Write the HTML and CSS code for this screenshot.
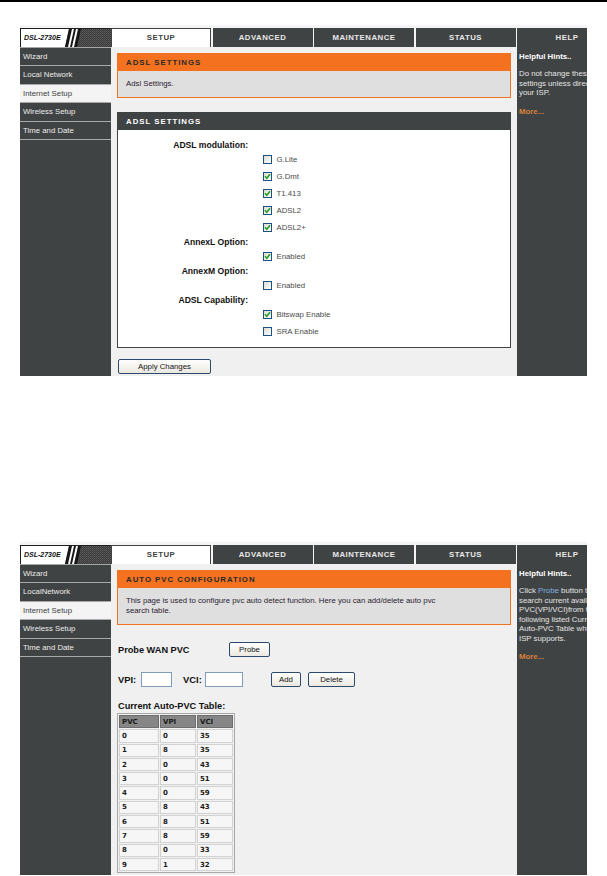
FILE: index.html
```html
<!DOCTYPE html>
<html>
<head>
    <meta charset="utf-8">
    <title>DSL-2730E Setup</title>
    <link rel="stylesheet" href="styles.css">
</head>
<body>
<div class="page-rule"></div>

<!-- ADSL settings page -->
<div class="shot shot-adsl">
    <div class="top-bar">
        <div class="logo">
            <span class="logo-text">DSL-2730E</span>
            <svg class="logo-mark" width="47" height="18" viewBox="0 0 47 18">
                <defs>
                    <pattern id="grain-a" width="2" height="2" patternUnits="userSpaceOnUse">
                        <rect width="2" height="2" fill="#3b3b3b"/>
                        <rect width="1" height="1" fill="#5e5e5e"/>
                        <rect x="1" y="1" width="1" height="1" fill="#4f4f4f"/>
                    </pattern>
                </defs>
                <rect width="47" height="18" fill="url(#grain-a)"/>
                <polygon points="0,0 5,0 1,18 0,18" fill="#fff"/>
                <polygon points="5,0 17,0 13,18 1,18" fill="#161616"/>
                <polygon points="8,0 10,0 6,18 4,18" fill="#fff"/>
                <polygon points="12,0 14,0 10,18 8,18" fill="#fff"/>
            </svg>
        </div>
        <div class="tabs">
            <div class="tab active">SETUP</div>
            <div class="tab">ADVANCED</div>
            <div class="tab">MAINTENANCE</div>
            <div class="tab">STATUS</div>
            <div class="tab">HELP</div>
        </div>
    </div>

    <div class="layout">
        <ul class="side-nav">
            <li>Wizard</li>
            <li>Local Network</li>
            <li class="current">Internet Setup</li>
            <li>Wireless Setup</li>
            <li>Time and Date</li>
        </ul>

        <div class="main">
            <div class="panel-orange">
                <div class="panel-title">ADSL SETTINGS</div>
                <div class="panel-body">Adsl Settings.</div>
            </div>

            <div class="panel-dark">
                <div class="panel-title">ADSL SETTINGS</div>
                <div class="opt-list">
                    <div class="opt-row head"><span class="opt-name">ADSL modulation:</span></div>
                    <div class="opt-row"><span class="opt-name"></span><span class="opt-value"><span class="check"></span>G.Lite</span></div>
                    <div class="opt-row"><span class="opt-name"></span><span class="opt-value"><span class="check"><svg width="7" height="7" viewBox="0 0 7 7"><path d="M1 3.3 L2.8 5.2 L6 1.3"/></svg></span>G.Dmt</span></div>
                    <div class="opt-row"><span class="opt-name"></span><span class="opt-value"><span class="check"><svg width="7" height="7" viewBox="0 0 7 7"><path d="M1 3.3 L2.8 5.2 L6 1.3"/></svg></span>T1.413</span></div>
                    <div class="opt-row"><span class="opt-name"></span><span class="opt-value"><span class="check"><svg width="7" height="7" viewBox="0 0 7 7"><path d="M1 3.3 L2.8 5.2 L6 1.3"/></svg></span>ADSL2</span></div>
                    <div class="opt-row"><span class="opt-name"></span><span class="opt-value"><span class="check"><svg width="7" height="7" viewBox="0 0 7 7"><path d="M1 3.3 L2.8 5.2 L6 1.3"/></svg></span>ADSL2+</span></div>
                    <div class="opt-row head"><span class="opt-name">AnnexL Option:</span></div>
                    <div class="opt-row"><span class="opt-name"></span><span class="opt-value"><span class="check"><svg width="7" height="7" viewBox="0 0 7 7"><path d="M1 3.3 L2.8 5.2 L6 1.3"/></svg></span>Enabled</span></div>
                    <div class="opt-row head"><span class="opt-name">AnnexM Option:</span></div>
                    <div class="opt-row"><span class="opt-name"></span><span class="opt-value"><span class="check"></span>Enabled</span></div>
                    <div class="opt-row head"><span class="opt-name">ADSL Capability:</span></div>
                    <div class="opt-row"><span class="opt-name"></span><span class="opt-value"><span class="check"><svg width="7" height="7" viewBox="0 0 7 7"><path d="M1 3.3 L2.8 5.2 L6 1.3"/></svg></span>Bitswap Enable</span></div>
                    <div class="opt-row"><span class="opt-name"></span><span class="opt-value"><span class="check"></span>SRA Enable</span></div>
                </div>
            </div>

            <button class="btn btn-apply">Apply Changes</button>
        </div>

        <div class="hints">
            <div class="hints-title">Helpful Hints..</div>
            <p>Do not change these<br>settings unless directed by<br>your ISP.</p>
            <div class="more">More...</div>
        </div>
    </div>
</div>

<!-- Auto PVC page -->
<div class="shot shot-pvc">
    <div class="top-bar">
        <div class="logo">
            <span class="logo-text">DSL-2730E</span>
            <svg class="logo-mark" width="47" height="18" viewBox="0 0 47 18">
                <defs>
                    <pattern id="grain-b" width="2" height="2" patternUnits="userSpaceOnUse">
                        <rect width="2" height="2" fill="#3b3b3b"/>
                        <rect width="1" height="1" fill="#5e5e5e"/>
                        <rect x="1" y="1" width="1" height="1" fill="#4f4f4f"/>
                    </pattern>
                </defs>
                <rect width="47" height="18" fill="url(#grain-b)"/>
                <polygon points="0,0 5,0 1,18 0,18" fill="#fff"/>
                <polygon points="5,0 17,0 13,18 1,18" fill="#161616"/>
                <polygon points="8,0 10,0 6,18 4,18" fill="#fff"/>
                <polygon points="12,0 14,0 10,18 8,18" fill="#fff"/>
            </svg>
        </div>
        <div class="tabs">
            <div class="tab active">SETUP</div>
            <div class="tab">ADVANCED</div>
            <div class="tab">MAINTENANCE</div>
            <div class="tab">STATUS</div>
            <div class="tab">HELP</div>
        </div>
    </div>

    <div class="layout">
        <ul class="side-nav">
            <li>Wizard</li>
            <li>LocalNetwork</li>
            <li class="current">Internet Setup</li>
            <li>Wireless Setup</li>
            <li>Time and Date</li>
        </ul>

        <div class="main">
            <div class="panel-orange">
                <div class="panel-title">AUTO PVC CONFIGURATION</div>
                <div class="panel-body"><p class="note">This page is used to configure pvc auto detect function. Here you can add/delete auto pvc search table.</p></div>
            </div>

            <div class="probe-row">
                <span class="probe-label">Probe WAN PVC</span>
                <button class="btn btn-probe">Probe</button>
            </div>

            <div class="vpi-row">
                <span class="field-label vpi-label">VPI:</span>
                <input class="field field-vpi" type="text">
                <span class="field-label vci-label">VCI:</span>
                <input class="field field-vci" type="text">
                <button class="btn btn-add">Add</button>
                <button class="btn btn-delete">Delete</button>
            </div>

            <div class="table-title">Current Auto-PVC Table:</div>
            <table class="pvc-table">
                <tr><th class="col-pvc">PVC</th><th class="col-vpi">VPI</th><th class="col-vci">VCI</th></tr>
                <tr><td>0</td><td>0</td><td>35</td></tr>
                <tr><td>1</td><td>8</td><td>35</td></tr>
                <tr><td>2</td><td>0</td><td>43</td></tr>
                <tr><td>3</td><td>0</td><td>51</td></tr>
                <tr><td>4</td><td>0</td><td>59</td></tr>
                <tr><td>5</td><td>8</td><td>43</td></tr>
                <tr><td>6</td><td>8</td><td>51</td></tr>
                <tr><td>7</td><td>8</td><td>59</td></tr>
                <tr><td>8</td><td>0</td><td>33</td></tr>
                <tr><td>9</td><td>1</td><td>32</td></tr>
            </table>
        </div>

        <div class="hints">
            <div class="hints-title">Helpful Hints..</div>
            <p>Click <span class="hint-link">Probe</span> button to<br>search current available<br>PVC(VPI/VCI)from the<br>following listed Current<br>Auto-PVC Table which<br>ISP supports.</p>
            <div class="more">More...</div>
        </div>
    </div>
</div>
</body>
</html>
```

FILE: styles.css
```css
body {
    margin: 0;
    background-color: #ffffff;
    font-family: "Liberation Sans", Arial, sans-serif;
    font-size: 7.8px;
    color: #222;
}

.page-rule {
    height: 2px;
    background-color: #000;
}

.shot {
    width: 567px;
    margin-left: 20px;
    overflow: hidden;
    background-color: #f0f0f0;
}

.shot-adsl {
    margin-top: 23px;
}

.shot-pvc {
    margin-top: 166px;
}

/* header: logo + tabs */
.top-bar {
    display: flex;
    padding-top: 3px;
    background-color: #f4f4f4;
}

.logo {
    display: flex;
    flex: 0 0 91px;
    height: 19px;
    box-sizing: border-box;
    border-top: 1px solid #1e1e1e;
    border-left: 1px solid #1e1e1e;
    background-color: #fff;
}

.logo-text {
    width: 43px;
    padding-left: 3px;
    box-sizing: border-box;
    font-size: 7px;
    font-style: italic;
    font-weight: bold;
    line-height: 18px;
    color: #111;
}

.logo-mark {
    display: block;
}

.tabs {
    display: flex;
    gap: 1.5px;
}

.tab {
    flex: 0 0 100px;
    height: 19px;
    box-sizing: border-box;
    background-color: #404343;
    color: #e8e8e8;
    font-weight: bold;
    letter-spacing: 0.5px;
    line-height: 19px;
    text-align: center;
}

.tab.active {
    background-color: #fff;
    color: #404343;
    border: 1px solid #404343;
    border-bottom: none;
    line-height: 18px;
}

/* body: nav | content | hints */
.layout {
    display: grid;
    grid-template-columns: 91px 406px 100px;
}

.side-nav {
    list-style: none;
    margin: 0;
    padding: 0;
    background-color: #404343;
    border-top: 1px solid #a8a8a8;
}

.side-nav li {
    height: 17.4px;
    line-height: 17.4px;
    padding-left: 3px;
    border-bottom: 1px solid #a8a8a8;
    color: #ececec;
}

.side-nav li.current {
    background-color: #f4f4f4;
    color: #404343;
}

.main {
    padding: 6px 6px 2px 6px;
}

.panel-orange {
    border: 1px solid #f3711f;
}

.panel-title {
    height: 17px;
    line-height: 17px;
    padding-left: 8px;
    font-weight: bold;
    letter-spacing: 1px;
}

.panel-orange .panel-title {
    background-color: #f3711f;
    color: #2a2a2a;
}

.panel-orange .panel-body {
    background-color: #dfdfdf;
    padding: 7.5px 8px;
    line-height: 10.5px;
    color: #2a2230;
}

.note {
    margin: 0;
    max-width: 325px;
}

.panel-dark {
    margin-top: 14px;
    border: 1px solid #404343;
    background-color: #fff;
}

.panel-dark .panel-title {
    background-color: #404343;
    color: #fff;
}

.opt-list {
    padding: 9px 0 7px;
}

.opt-row {
    display: flex;
    align-items: center;
    height: 17px;
}

.opt-row.head {
    height: 12px;
}

.opt-name {
    flex: 0 0 130px;
    text-align: right;
    font-size: 8.6px;
    font-weight: bold;
    color: #111;
}

.opt-value {
    display: flex;
    align-items: center;
    gap: 5px;
    margin-left: 14.5px;
    color: #4a4a4a;
}

.check {
    display: inline-block;
    width: 9px;
    height: 9px;
    box-sizing: border-box;
    border: 1px solid #1c5180;
    background: linear-gradient(135deg, #dcdcd4, #ffffff);
}

.check svg {
    display: block;
}

.check path {
    fill: none;
    stroke: #21a121;
    stroke-width: 1.6;
}

/* buttons and inputs */
.btn {
    height: 15px;
    padding: 0;
    box-sizing: border-box;
    border: 1px solid #2c4a6e;
    border-radius: 2px;
    background: linear-gradient(#ffffff, #ebe8df);
    font-family: "Liberation Sans", Arial, sans-serif;
    font-size: 7.8px;
    color: #111;
}

.btn-apply {
    display: block;
    width: 93px;
    margin-top: 11.5px;
    margin-left: 1px;
}

.probe-row {
    display: flex;
    align-items: center;
    margin-top: 17px;
    padding-left: 1px;
}

.probe-label {
    flex: 0 0 111px;
    font-size: 9.2px;
    font-weight: bold;
    color: #111;
}

.btn-probe {
    width: 41px;
}

.vpi-row {
    display: flex;
    align-items: center;
    margin-top: 15px;
    padding-left: 1px;
}

.field-label {
    font-size: 9.4px;
    font-weight: bold;
    color: #111;
}

.vpi-label {
    width: 23px;
}

.vci-label {
    width: 22px;
    margin-left: 11px;
}

.field {
    height: 15px;
    padding: 0;
    box-sizing: border-box;
    border: 1px solid #7f9db9;
    background-color: #fff;
}

.field-vpi {
    width: 31px;
}

.field-vci {
    width: 38px;
}

.btn-add {
    width: 30px;
    margin-left: 28px;
}

.btn-delete {
    width: 47px;
    margin-left: 7px;
}

.table-title {
    margin-top: 14px;
    padding-left: 1px;
    line-height: 10px;
    font-size: 9.2px;
    font-weight: bold;
    color: #111;
}

.pvc-table {
    margin-top: 2px;
    border: 1px solid #a8a8a8;
    border-spacing: 1px;
    font-family: "DejaVu Sans", sans-serif;
    font-size: 7px;
    font-weight: bold;
    color: #1a1a1a;
}

.pvc-table th,
.pvc-table td {
    height: 11.3px;
    padding: 0 2px;
    text-align: left;
    border: 1px solid #d2d2d2;
    background-color: #f6f6f6;
}

.pvc-table th {
    background-color: #868686;
    border-color: #6e6e6e;
}

.col-pvc {
    width: 34px;
}

.col-vpi,
.col-vci {
    width: 30px;
}

/* right column */
.hints {
    padding: 5px 0 0 2px;
    background-color: #404343;
    color: #e4e4e4;
    line-height: 9.5px;
    white-space: nowrap;
}

.hints-title {
    font-weight: bold;
    color: #fff;
}

.hints p {
    margin: 7.75px 0 0;
}

.hint-link {
    color: #7fb0e0;
}

.more {
    margin-top: 9.2px;
    font-weight: bold;
    color: #d9813c;
}
```
